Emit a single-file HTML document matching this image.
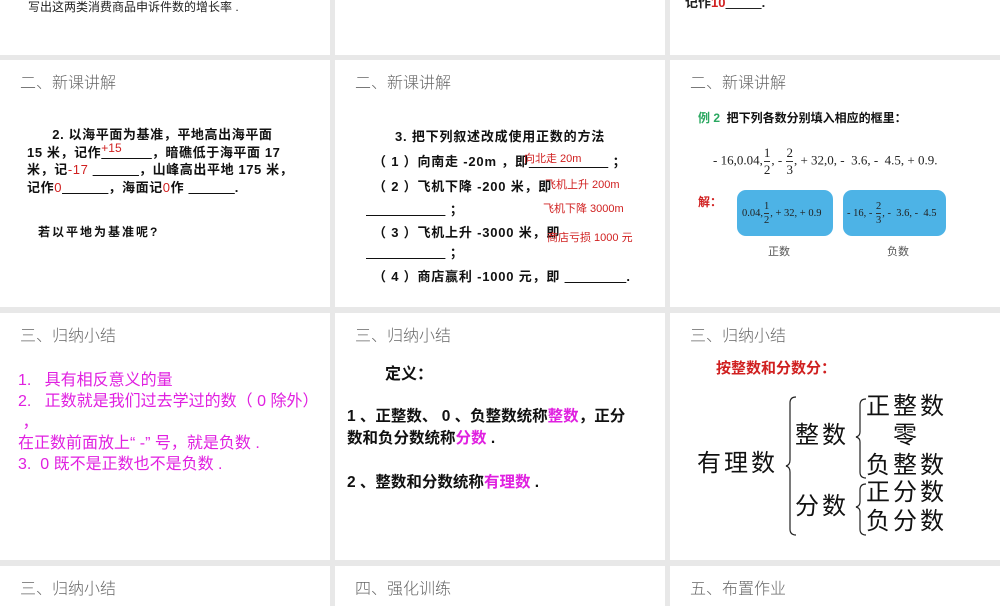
<!DOCTYPE html>
<html><head><meta charset="utf-8"><style>
body{margin:0;width:1000px;height:600px;background:#e8e8e8;position:relative;overflow:hidden;font-family:"Liberation Sans","Noto Sans CJK SC",sans-serif}
.p{position:absolute;background:#fff}
.t{position:absolute;white-space:nowrap;line-height:1}
.h{font-size:16px;color:#666;font-weight:300}
.b{font-weight:bold}
.m{color:#e020e0}
.r{color:#d02020}
.blue{position:absolute;background:#4db3e6;border-radius:9px}
.fr{display:inline-block;vertical-align:middle;text-align:center;line-height:1.25;margin:0 1px}
.fr span{display:block}
.fr span:first-child{border-bottom:1px solid #333}
.serif{font-family:"Liberation Serif","Noto Serif CJK SC",serif}
.big{font-size:24px;letter-spacing:3px;color:#111}
</style></head><body>
<div class="p" style="left:0;top:0;width:330px;height:55px"></div>
<div class="p" style="left:335px;top:0;width:330px;height:55px"></div>
<div class="p" style="left:670px;top:0;width:330px;height:55px"></div>
<div class="p" style="left:0;top:60px;width:330px;height:247px"></div>
<div class="p" style="left:335px;top:60px;width:330px;height:247px"></div>
<div class="p" style="left:670px;top:60px;width:330px;height:247px"></div>
<div class="p" style="left:0;top:313px;width:330px;height:247px"></div>
<div class="p" style="left:335px;top:313px;width:330px;height:247px"></div>
<div class="p" style="left:670px;top:313px;width:330px;height:247px"></div>
<div class="p" style="left:0;top:566px;width:330px;height:40px"></div>
<div class="p" style="left:335px;top:566px;width:330px;height:40px"></div>
<div class="p" style="left:670px;top:566px;width:330px;height:40px"></div>

<!-- top row -->
<div class="t" style="left:28px;top:1px;font-size:12px;color:#222">写出这两类消费商品申诉件数的增长率 .</div>
<div class="t b" style="left:685px;top:-4px;font-size:13px;color:#222">记作<span class="r">10</span><u>&nbsp;&nbsp;&nbsp;&nbsp;&nbsp;&nbsp;&nbsp;&nbsp;&nbsp;&nbsp;</u>.</div>

<!-- row2 titles -->
<div class="t h" style="left:20px;top:76px">二、新课讲解</div>
<div class="t h" style="left:355px;top:76px">二、新课讲解</div>
<div class="t h" style="left:690px;top:76px">二、新课讲解</div>

<!-- row2 col1 -->
<div style="position:absolute;left:27px;top:126px;font-size:13px;line-height:17.5px;color:#111;font-weight:bold;white-space:nowrap;letter-spacing:0.6px">
<div>&nbsp;&nbsp;&nbsp;&nbsp;&nbsp;&nbsp;2. 以海平面为基准，平地高出海平面</div>
<div>15 米，记作<span style="position:relative"><u>&nbsp;&nbsp;&nbsp;&nbsp;&nbsp;&nbsp;&nbsp;&nbsp;&nbsp;&nbsp;&nbsp;&nbsp;</u><span class="r" style="position:absolute;left:0;top:-5px;font-weight:normal;font-size:12px;letter-spacing:0">+15</span></span>，暗礁低于海平面 17</div>
<div>米，记<span class="r" style="font-weight:normal">-17</span> <u>&nbsp;&nbsp;&nbsp;&nbsp;&nbsp;&nbsp;&nbsp;&nbsp;&nbsp;&nbsp;&nbsp;</u>，山峰高出平地 175 米，</div>
<div>记作<span class="r" style="font-weight:normal">0</span><u>&nbsp;&nbsp;&nbsp;&nbsp;&nbsp;&nbsp;&nbsp;&nbsp;&nbsp;&nbsp;&nbsp;</u>，海面记<span class="r" style="font-weight:normal">0</span>作 <u>&nbsp;&nbsp;&nbsp;&nbsp;&nbsp;&nbsp;&nbsp;&nbsp;&nbsp;&nbsp;&nbsp;</u>.</div>
</div>
<div class="t b" style="left:38px;top:226px;font-size:12px;color:#111;letter-spacing:2px">若以平地为基准呢?</div>

<!-- row2 col2 -->
<div style="letter-spacing:0.8px">
<div class="t b" style="left:395px;top:130px;font-size:13px;color:#111">3. 把下列叙述改成使用正数的方法</div>
<div class="t b" style="left:373px;top:155px;font-size:13px;color:#111">（ 1 ）向南走 -20m ，即<u>&nbsp;&nbsp;&nbsp;&nbsp;&nbsp;&nbsp;&nbsp;&nbsp;&nbsp;&nbsp;&nbsp;&nbsp;&nbsp;&nbsp;&nbsp;&nbsp;&nbsp;&nbsp;</u> ；</div>
<div class="t b" style="left:373px;top:180px;font-size:13px;color:#111">（ 2 ）飞机下降 -200 米，即</div>
<div class="t b" style="left:366px;top:203px;font-size:13px;color:#111"><u>&nbsp;&nbsp;&nbsp;&nbsp;&nbsp;&nbsp;&nbsp;&nbsp;&nbsp;&nbsp;&nbsp;&nbsp;&nbsp;&nbsp;&nbsp;&nbsp;&nbsp;&nbsp;</u> ；</div>
<div class="t b" style="left:373px;top:226px;font-size:13px;color:#111">（ 3 ）飞机上升 -3000 米，即</div>
<div class="t b" style="left:366px;top:246px;font-size:13px;color:#111"><u>&nbsp;&nbsp;&nbsp;&nbsp;&nbsp;&nbsp;&nbsp;&nbsp;&nbsp;&nbsp;&nbsp;&nbsp;&nbsp;&nbsp;&nbsp;&nbsp;&nbsp;&nbsp;</u> ；</div>
<div class="t b" style="left:373px;top:270px;font-size:13px;color:#111">（ 4 ）商店赢利 -1000 元，即 <u>&nbsp;&nbsp;&nbsp;&nbsp;&nbsp;&nbsp;&nbsp;&nbsp;&nbsp;&nbsp;&nbsp;&nbsp;&nbsp;&nbsp;</u>.</div>
</div>
<div class="t r" style="left:524px;top:154px;font-size:11px">向北走 20m</div>
<div class="t r" style="left:545px;top:180px;font-size:11px">飞机上升 200m</div>
<div class="t r" style="left:543px;top:204px;font-size:11px">飞机下降 3000m</div>
<div class="t r" style="left:547px;top:233px;font-size:11px">商店亏损 1000 元</div>

<!-- row2 col3 -->
<div class="t b" style="left:698px;top:112px;font-size:12px;color:#111"><span style="color:#2aa860">例 2</span>&nbsp; 把下列各数分别填入相应的框里：</div>
<div class="t serif" style="left:713px;top:145px;font-size:13px;color:#222;line-height:26px">- 16,0.04,<span class="fr"><span>1</span><span>2</span></span>, - <span class="fr"><span>2</span><span>3</span></span>, + 32,0, - &nbsp;3.6, - &nbsp;4.5, + 0.9.</div>
<div class="t b r" style="left:698px;top:196px;font-size:12px">解：</div>
<div class="blue" style="left:737px;top:190px;width:96px;height:46px"></div>
<div class="blue" style="left:843px;top:190px;width:103px;height:46px"></div>
<div class="t serif" style="left:742px;top:200px;font-size:10.5px;color:#222;line-height:26px">0.04,<span class="fr"><span>1</span><span>2</span></span>, + 32, + 0.9</div>
<div class="t serif" style="left:847px;top:200px;font-size:10.5px;color:#222;line-height:26px">- 16, - <span class="fr"><span>2</span><span>3</span></span>, - &nbsp;3.6, - &nbsp;4.5</div>
<div class="t" style="left:768px;top:247px;font-size:11px;color:#555">正数</div>
<div class="t" style="left:887px;top:247px;font-size:11px;color:#555">负数</div>

<!-- row3 titles -->
<div class="t h" style="left:20px;top:329px">三、归纳小结</div>
<div class="t h" style="left:355px;top:329px">三、归纳小结</div>
<div class="t h" style="left:690px;top:329px">三、归纳小结</div>

<!-- row3 col1 -->
<div style="position:absolute;left:18px;top:370px;font-size:16px;line-height:21px;white-space:nowrap" class="m">
<div>1.&nbsp;&nbsp; 具有相反意义的量</div>
<div>2.&nbsp;&nbsp; 正数就是我们过去学过的数（ 0 除外）</div>
<div>&nbsp;，</div>
<div>在正数前面放上“ -” 号，就是负数 .</div>
<div>3.&nbsp; 0 既不是正数也不是负数 .</div>
</div>

<!-- row3 col2 -->
<div class="t b" style="left:385px;top:367px;font-size:16px;color:#111">定义：</div>
<div style="position:absolute;left:347px;top:406px;font-size:15.5px;line-height:22px;font-weight:bold;color:#111;white-space:nowrap">
<div>1 、正整数、 0 、负整数统称<span class="m">整数</span>，正分</div>
<div>数和负分数统称<span class="m">分数</span> .</div>
<div style="height:22px"></div>
<div>2 、整数和分数统称<span class="m">有理数</span> .</div>
</div>

<!-- row3 col3 -->
<div class="t b r" style="left:716px;top:361px;font-size:15px">按整数和分数分：</div>
<div class="t big" style="left:697px;top:452px">有理数</div>
<div class="t big" style="left:795px;top:424px">整数</div>
<div class="t big" style="left:795px;top:495px">分数</div>
<div class="t big" style="left:866px;top:395px">正整数</div>
<div class="t big" style="left:893px;top:424px">零</div>
<div class="t big" style="left:866px;top:454px">负整数</div>
<div class="t big" style="left:866px;top:481px">正分数</div>
<div class="t big" style="left:866px;top:510px">负分数</div>
<svg style="position:absolute;left:0;top:0" width="1000" height="600" fill="none" stroke="#222" stroke-width="1.2">
<path d="M796 397 Q790 397 790 403 L790 460 Q790 465 786 466 Q790 467 790 472 L790 529 Q790 535 796 535"/>
<path d="M866 399 Q860 399 860 405 L860 432 Q860 436 856 437 Q860 438 860 442 L860 472 Q860 478 866 478"/>
<path d="M866 484 Q860 484 860 490 L860 502 Q860 506 856 507 Q860 508 860 512 L860 529 Q860 535 866 535"/>
</svg>

<!-- row4 -->
<div class="t h" style="left:20px;top:582px">三、归纳小结</div>
<div class="t h" style="left:355px;top:582px">四、强化训练</div>
<div class="t h" style="left:690px;top:582px">五、布置作业</div>
</body></html>
